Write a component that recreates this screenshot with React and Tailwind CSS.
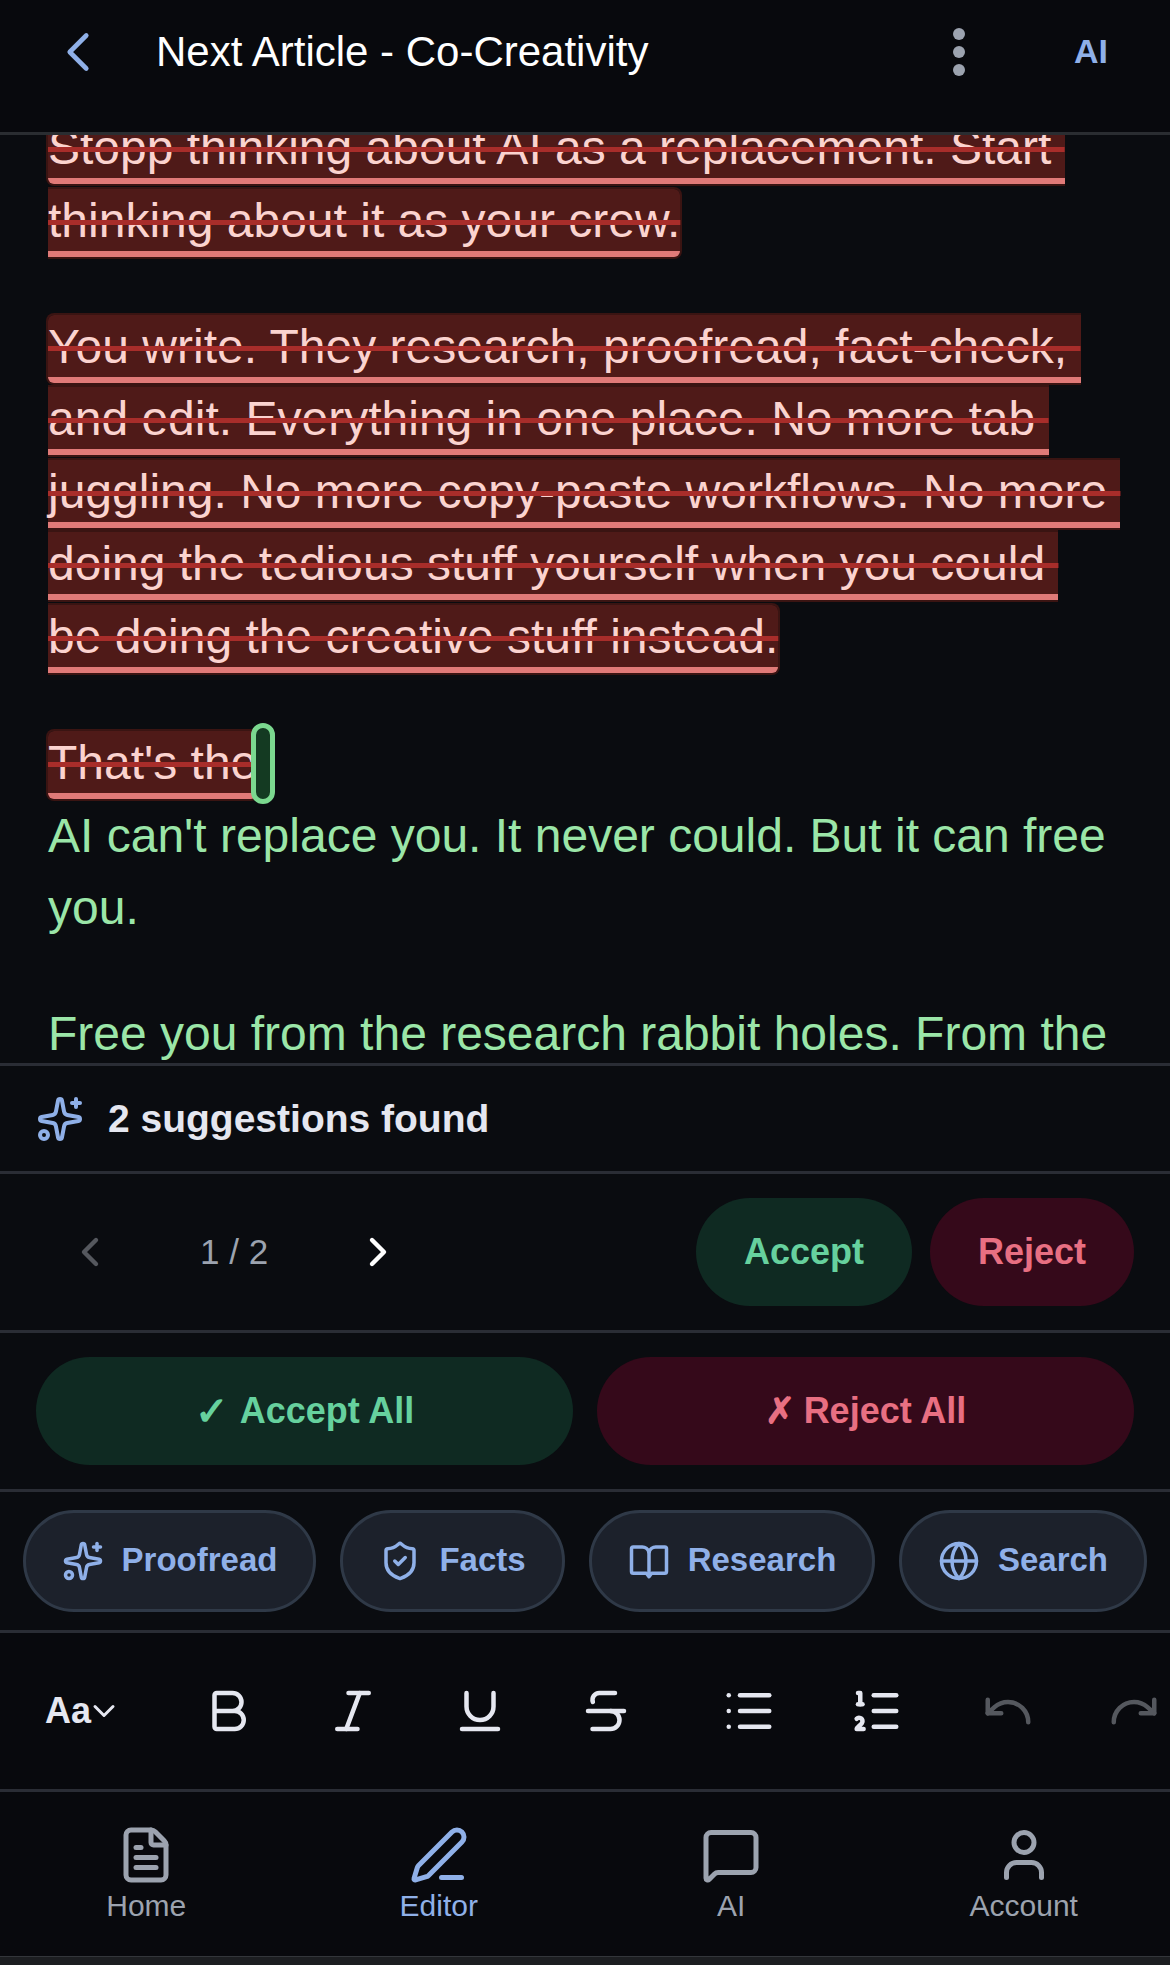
import React from "react";
import {
  ChevronLeft,
  ChevronRight,
  ChevronDown,
  Sparkles,
  ShieldCheck,
  Globe,
  Bold,
  Italic,
  Underline,
  Strikethrough,
  List,
  ListOrdered,
  Undo,
  Redo,
  FileText,
  PenLine,
  MessageSquare,
  User,
} from "lucide-react";

const font = "font-['Liberation_Sans',Arial,sans-serif]";

// lucide's book-open has a different top, this one follows the picture
const BookIcon = ({ size = 42, strokeWidth = 2 }) => (
  <svg width={size} height={size} viewBox="0 0 24 24" fill="none" stroke="currentColor" strokeWidth={strokeWidth} strokeLinecap="round" strokeLinejoin="round">
    <path d="M12 7v13" />
    <path d="M3 4h5a4 4 0 0 1 4 3 4 4 0 0 1 4-3h5a1 1 0 0 1 1 1v13a1 1 0 0 1-1 1h-7.5L12 21l-1.500-2H3a1 1 0 0 1-1-1V5a1 1 0 0 1 1-1z" />
  </svg>
);

const Del = ({ children }) => (
  <span className="bg-[#4f1a18] text-[#fbd3cf] rounded-[6px] border-b-[6px] border-[#e07a78] line-through decoration-[#a82d2a] decoration-[5px] pt-[5px] pb-[4px] shadow-[0_0_0_2px_#3a1412]">
    {children}
  </span>
);

const Tool = ({ icon: Icon, label, w }) => (
  <button className={`h-[102px] rounded-full border-[3px] border-[#2f3947] bg-[#1c212b] flex items-center justify-center gap-[18px] text-[#8fb0e8] text-[33px] font-bold ${w}`}>
    <Icon size={42} strokeWidth={2} />
    <span className="-mt-[2px]">{label}</span>
  </button>
);

const NavItem = ({ icon: Icon, label, active }) => (
  <div className={`flex flex-col items-center ${active ? "text-[#8fb0e8]" : "text-[#9ca3af]"}`}>
    <Icon size={60} strokeWidth={2} />
    <span className="text-[30px] leading-[36px] mt-[3px]">{label}</span>
  </div>
);

export default function App() {
  return (
    <div className={`${font} w-[1170px] h-[1965px] bg-[#0a0c10] flex flex-col overflow-hidden`}>
      <header className="h-[135px] shrink-0 border-b-[3px] border-[#2a2d31] bg-[#08090d] flex items-center pl-[45px] pr-[62px] pb-[29px]">
        <ChevronLeft size={66} className="text-[#8fb0e8]" strokeWidth={1.7} />
        <h1 className="ml-[45px] text-[42px] text-white flex-1">Next Article - Co-Creativity</h1>
        <div className="flex flex-col gap-[6px] mr-[109px]">
          <div className="w-[12px] h-[12px] rounded-full bg-[#9ca3af]" />
          <div className="w-[12px] h-[12px] rounded-full bg-[#9ca3af]" />
          <div className="w-[12px] h-[12px] rounded-full bg-[#9ca3af]" />
        </div>
        <span className="text-[34px] font-bold text-[#8fb0e8]">AI</span>
      </header>

      <main className="flex-1 min-h-0 overflow-hidden px-[48px] text-[48px] leading-[72.6px]">
        <div className="-mt-[23px]">
          <p className="mb-[53.5px] whitespace-nowrap">
            <Del>
              Stopp thinking about AI as a replacement. Start&nbsp;<br />
              thinking about it as your crew.
            </Del>
          </p>
          <p className="mb-[53.5px] whitespace-nowrap">
            <Del>
              You write. They research, proofread, fact-check,&nbsp;<br />
              and edit. Everything in one place. No more tab&nbsp;<br />
              juggling. No more copy-paste workflows. No more&nbsp;<br />
              doing the tedious stuff yourself when you could&nbsp;<br />
              be doing the creative stuff instead.
            </Del>
          </p>
          <p className="relative h-[72.6px]">
            <Del>That's the</Del>
            <span className="absolute left-[203px] -top-[4px] w-[24px] h-[81px] rounded-full border-[5px] border-[#7bd88f] bg-[#143a22]" />
          </p>
          <p className="text-[#9be6a8] mb-[53.5px]">AI can't replace you. It never could. But it can free you.</p>
          <p className="text-[#9be6a8]">Free you from the research rabbit holes. From the</p>
        </div>
      </main>

      <section className="h-[108px] shrink-0 border-t-[3px] border-[#2a2d35] flex items-center pl-[36px] gap-[24px]">
        <Sparkles size={48} className="text-[#8fb0e8]" strokeWidth={2} />
        <span className="mt-[2px] text-[39px] font-bold text-[#e5e7f0]">2 suggestions found</span>
      </section>

      <section className="h-[159px] shrink-0 border-t-[3px] border-[#2a2d35] flex items-center pl-[66px] pr-[36px]">
        <div className="flex items-center gap-[86px]">
          <ChevronLeft size={48} className="text-[#55585e]" strokeWidth={2.2} />
          <span className="text-[35px] text-[#9ca3af]">1 / 2</span>
          <ChevronRight size={48} className="text-white" strokeWidth={2.2} />
        </div>
        <div className="ml-auto flex gap-[18px]">
          <button className="w-[216px] h-[108px] rounded-full bg-[#0f2a22] text-[#66d19e] text-[36px] font-bold">Accept</button>
          <button className="w-[204px] h-[108px] rounded-full bg-[#35091a] text-[#e86f82] text-[36px] font-bold">Reject</button>
        </div>
      </section>

      <section className="h-[159px] shrink-0 border-t-[3px] border-[#2a2d35] flex items-center gap-[24px] px-[36px]">
        <button className="flex-1 h-[108px] rounded-full bg-[#0f2a22] text-[#66d19e] text-[36px] font-bold flex items-center justify-center gap-[11px]">
          <span className="text-[40px] leading-none">✓</span>
          <span>Accept All</span>
        </button>
        <button className="flex-1 h-[108px] rounded-full bg-[#35091a] text-[#e86f82] text-[36px] font-bold flex items-center justify-center gap-[9px]">
          <span className="leading-none">✗</span>
          <span>Reject All</span>
        </button>
      </section>

      <section className="h-[141px] shrink-0 border-t-[3px] border-[#2a2d35] flex items-center gap-[24px] pl-[23px]">
        <Tool icon={Sparkles} label="Proofread" w="w-[293px]" />
        <Tool icon={ShieldCheck} label="Facts" w="w-[225px]" />
        <Tool icon={BookIcon} label="Research" w="w-[286px]" />
        <Tool icon={Globe} label="Search" w="w-[248px]" />
      </section>

      <section className="h-[159px] shrink-0 border-t-[3px] border-[#2a2d35] bg-[#08090d] flex items-center text-[#e5e7f0] pl-[45px]">
        <span className="text-[36px] font-bold">Aa</span>
        <ChevronDown size={36} strokeWidth={2} className="-ml-[5px]" />
        <Bold size={54} strokeWidth={2} className="ml-[79px] shrink-0" />
        <Italic size={54} strokeWidth={2} className="ml-[71px] shrink-0" />
        <Underline size={54} strokeWidth={2} className="ml-[73px] shrink-0" />
        <Strikethrough size={54} strokeWidth={2} className="ml-[72px] shrink-0" />
        <List size={54} strokeWidth={2} className="ml-[89px] shrink-0" />
        <ListOrdered size={54} strokeWidth={2} className="ml-[73px] shrink-0" />
        <Undo size={54} strokeWidth={2} className="ml-[78px] shrink-0 text-[#55585e]" />
        <Redo size={54} strokeWidth={2} className="ml-[72px] shrink-0 text-[#55585e]" />
      </section>

      <nav className="h-[167px] shrink-0 border-t-[3px] border-[#2a2d35] bg-[#08090d] grid grid-cols-4 pt-[33px]">
        <NavItem icon={FileText} label="Home" />
        <NavItem icon={PenLine} label="Editor" active />
        <NavItem icon={MessageSquare} label="AI" />
        <NavItem icon={User} label="Account" />
      </nav>

      <div className="h-[9px] shrink-0 bg-[#1c1e21] border-t-[1px] border-[#33363a]" />
    </div>
  );
}
